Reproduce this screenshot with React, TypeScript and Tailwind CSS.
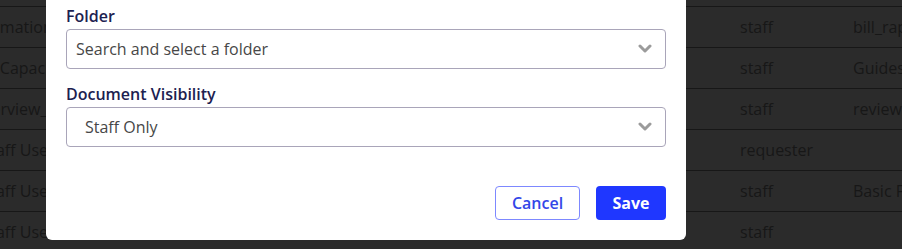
import React from "react";

const rows: [string, string, string][] = [
  ["Document Name", "Role", "Folder"],
  ["Information Sheet", "staff", "bill_rapport"],
  ["Max Capacity Plan", "staff", "Guides"],
  ["_Overview_2023", "staff", "reviews"],
  ["IT Staff User Guide", "requester", ""],
  ["IT Staff User Manual", "staff", "Basic Forms"],
  ["IT Staff User Notes", "staff", ""],
];

function Chevron() {
  return (
    <svg width="14" height="10" viewBox="0 0 14 10" fill="none">
      <polyline
        points="2,2 7,7 12,2"
        stroke="#9b9b9b"
        strokeWidth="3"
        strokeLinecap="round"
        strokeLinejoin="round"
      />
    </svg>
  );
}

function Select({ value, padLeft }: { value: string; padLeft: string }) {
  return (
    <div
      className={`flex h-[40px] w-[600px] items-center justify-between rounded-[4px] border border-[#a9a5b9] bg-white pr-[13px] ${padLeft}`}
    >
      <span className="text-[16px] leading-[24px] text-[#474747]">{value}</span>
      <Chevron />
    </div>
  );
}

export default function App() {
  return (
    <div
      className="relative h-[249px] w-[902px] overflow-hidden bg-[#2b2b2b]"
      style={{ fontFamily: '"Open Sans", "Liberation Sans", sans-serif' }}
    >
      <div className="mt-[-34px] flex flex-col">
        {rows.map((r, i) => (
          <div
            key={i}
            className="flex h-[41px] items-center whitespace-nowrap border-b border-[#171717] text-[16px] text-[#171717]"
          >
            <div className="ml-[-36px] w-[776px] shrink-0">{r[0]}</div>
            <div className="w-[113px] shrink-0">{r[1]}</div>
            <div className="shrink-0">{r[2]}</div>
          </div>
        ))}
      </div>

      <div className="absolute left-[46px] top-0 flex w-[640px] flex-col rounded-b-[6px] bg-white px-[20px] pb-[20px] pt-[4px]">
        <label className="mb-[1px] text-[16px] font-semibold leading-[24px] text-[#1c2150]">
          Folder
        </label>
        <Select value="Search and select a folder" padLeft="pl-[9px]" />
        <label className="mb-[1px] mt-[13px] text-[16px] font-semibold leading-[24px] text-[#1c2150]">
          Document Visibility
        </label>
        <Select value="Staff Only" padLeft="pl-[18px]" />
        <div className="mt-[39px] flex justify-end gap-[16px]">
          <button className="h-[34px] w-[85px] rounded-[4px] border border-[#7d88ff] bg-white text-[16px] font-semibold text-[#3346e8]">
            Cancel
          </button>
          <button className="h-[34px] w-[70px] rounded-[4px] bg-[#1f37ff] text-[16px] font-bold text-white">
            Save
          </button>
        </div>
      </div>
    </div>
  );
}
